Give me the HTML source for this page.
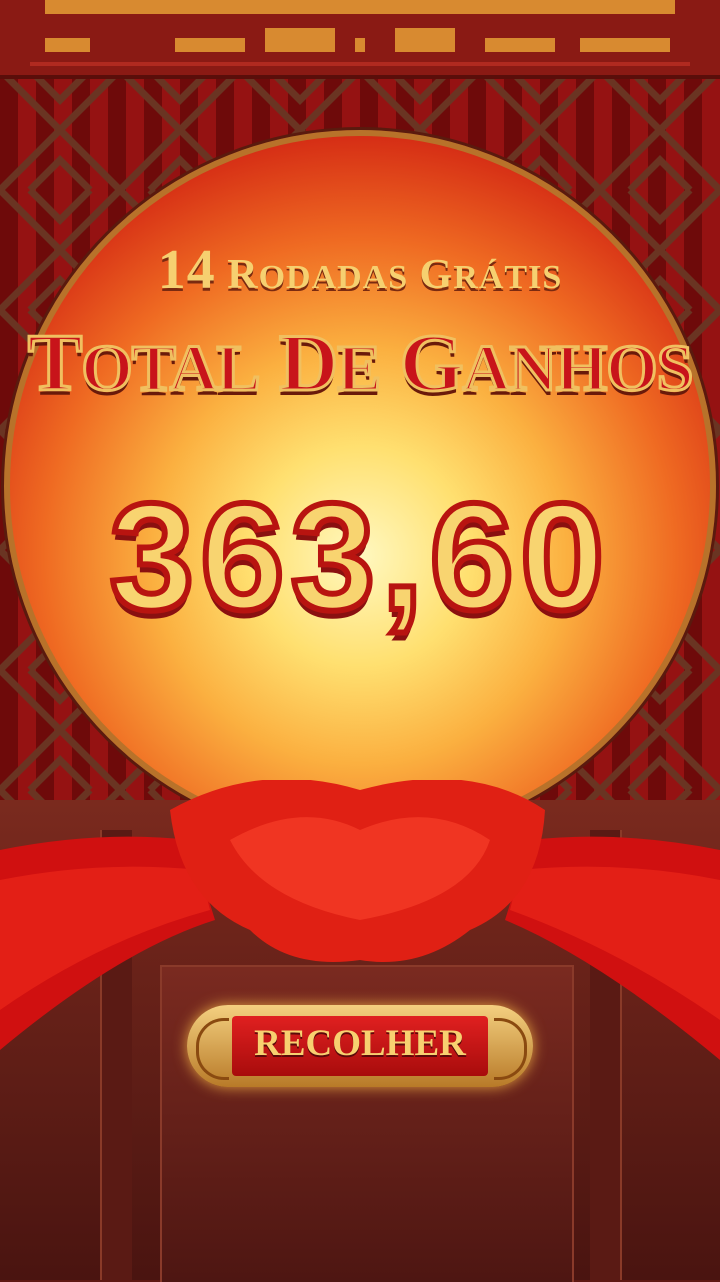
<!DOCTYPE html>
<html><head><meta charset="utf-8"><style>
*{margin:0;padding:0}
body{width:720px;height:1280px;overflow:hidden;position:relative;background:#5e1812;font-family:"Liberation Serif",serif}
.abs{position:absolute}
</style></head><body>
<div class="abs" style="left:0;top:70px;width:720px;height:740px;background:repeating-linear-gradient(90deg,#6e0a0a 0 18px,#951212 18px 36px)"></div>
<svg class="abs" style="left:0;top:70px" width="720" height="740">
<defs><pattern id="p" width="120" height="120" patternUnits="userSpaceOnUse">
<path d="M0 0L60 60L0 120M120 0L60 60L120 120M30 0L60 30L90 0M30 120L60 90L90 120" stroke="#6a3422" stroke-width="7" fill="none"/>
</pattern></defs>
<rect width="720" height="740" fill="url(#p)"/>
</svg>
<div class="abs" style="left:0;top:0;width:720px;height:75px;background:#8a1a14;border-bottom:4px solid #5a0e0a"></div>
<svg class="abs" style="left:0;top:0" width="720" height="75">
<g fill="#d88a30">
<rect x="45" y="0" width="630" height="14"/>
<rect x="45" y="38" width="45" height="14"/><rect x="175" y="38" width="70" height="14"/><rect x="265" y="28" width="70" height="24"/>
<rect x="355" y="38" width="10" height="14"/><rect x="395" y="28" width="60" height="24"/><rect x="485" y="38" width="70" height="14"/><rect x="580" y="38" width="90" height="14"/>
</g>
<rect x="30" y="62" width="660" height="4" fill="#b02a20"/>
</svg>
<div class="abs" style="left:4px;top:130px;width:700px;height:700px;border-radius:50%;border:6px solid #b8722a;box-shadow:0 0 0 3px #5a1a0e;background:radial-gradient(circle at 50% 60%,#fff8c0 0%,#ffe070 20%,#fbb040 38%,#ef6a22 58%,#d42a14 78%,#b0100c 100%)"></div>
<div class="abs" style="left:0;top:800px;width:720px;height:480px;background:linear-gradient(#7a2a1e,#4a1410)"></div>
<div class="abs" style="left:100px;top:830px;width:30px;height:450px;background:#5a1a14;border-left:2px solid #8a3a28"></div>
<div class="abs" style="left:590px;top:830px;width:30px;height:450px;background:#5a1a14;border-right:2px solid #8a3a28"></div>
<div class="abs" style="left:160px;top:965px;width:410px;height:315px;background:linear-gradient(#7a2a20,#4e1612);border:2px solid #8a3a2a;border-bottom:none"></div>
<svg class="abs" style="left:0;top:780px" width="720" height="300">
<path d="M0 70Q100 50 190 60L215 140Q120 170 0 270Z" fill="#d01010"/>
<path d="M0 100Q100 80 200 90L210 130Q100 160 0 230Z" fill="#f02a1a" opacity=".6"/>
<path d="M720 70Q620 50 530 60L505 140Q600 180 720 280Z" fill="#d01010"/>
<path d="M720 100Q620 80 520 90L510 130Q620 170 720 240Z" fill="#f02a1a" opacity=".6"/>
<path d="M170 30Q260 -20 360 10Q470 -20 545 30Q540 120 470 150Q420 190 360 180Q290 190 250 150Q180 120 170 30Z" fill="#e02014"/>
<path d="M230 60Q300 20 360 50Q430 20 490 60Q470 120 360 140Q260 120 230 60Z" fill="#ff4a30" opacity=".5"/>
</svg>
<div class="abs" style="left:0;top:238px;width:720px;text-align:center;color:#f6d070;font-weight:bold;font-size:42px;text-shadow:0 3px 0 #7a2a10;letter-spacing:1px"><span style="font-size:56px">14</span> R<span style="font-size:34px">ODADAS</span> G<span style="font-size:34px">RÁTIS</span></div>
<div class="abs" style="left:0;top:316px;width:720px;text-align:center;color:#c8141a;font-weight:bold;font-size:82px;-webkit-text-stroke:3px #f0c060;text-shadow:0 5px 0 #6a1a0a;letter-spacing:-1px">T<span style="font-size:66px">OTAL</span> D<span style="font-size:66px">E</span> G<span style="font-size:66px">ANHOS</span></div>
<div class="abs" style="left:0;top:470px;width:720px;text-align:center;font-family:'Liberation Sans',sans-serif;font-weight:bold;font-size:152px;color:#f8d470;-webkit-text-stroke:6px #b81410;text-shadow:0 8px 0 #8a1010;letter-spacing:6px">363,60</div>
<div class="abs" style="left:187px;top:1005px;width:346px;height:82px;border-radius:41px;background:linear-gradient(#f4d080,#b87a28);box-shadow:0 0 14px #e0a040"></div>
<div class="abs" style="left:232px;top:1016px;width:256px;height:60px;background:linear-gradient(#e02020,#a80c0c);border-radius:4px"></div>
<div class="abs" style="left:196px;top:1018px;width:30px;height:56px;border:3px solid #8a4a10;border-right:none;border-radius:28px 0 0 28px"></div>
<div class="abs" style="left:494px;top:1018px;width:30px;height:56px;border:3px solid #8a4a10;border-left:none;border-radius:0 28px 28px 0"></div>
<div class="abs" style="left:187px;top:1022px;width:346px;text-align:center;color:#f8d070;font-weight:bold;font-size:37px;text-shadow:0 2px 0 #5a0a0a">RECOLHER</div>
</body></html>
